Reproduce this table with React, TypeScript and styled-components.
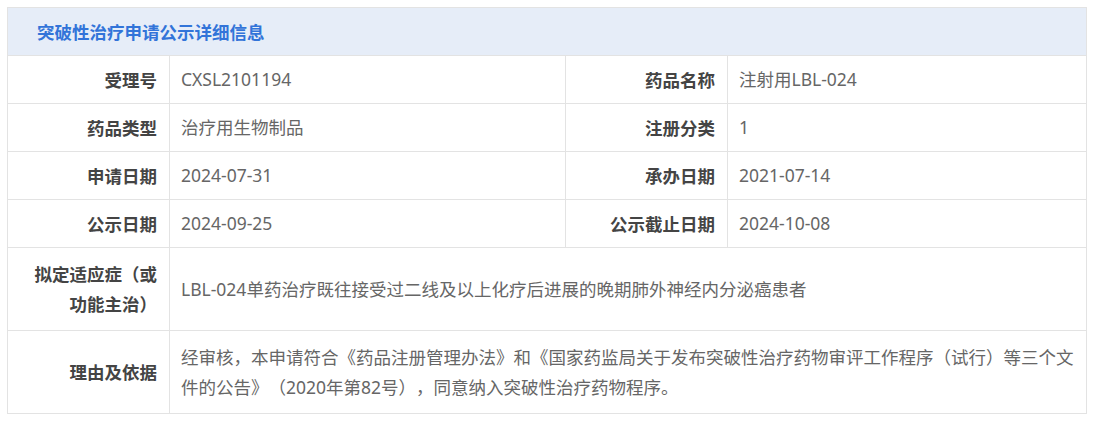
import React from "react";
import styled, { createGlobalStyle } from "styled-components";

const GlobalStyle = createGlobalStyle`
  html, body { margin: 0; padding: 0; background: #ffffff; }
  body {
    font-family: "Noto Sans", "Noto Sans CJK SC", sans-serif;
    text-spacing-trim: space-all;
  }
`;

const Page = styled.div`
  padding: 7px;
`;

const Table = styled.div`
  width: 1080px;
  box-sizing: border-box;
  display: grid;
  grid-template-columns: 162px 396px 162px 1fr;
  border-top: 1px solid #e3e3e3;
  border-left: 1px solid #e3e3e3;
`;

const Header = styled.div`
  grid-column: 1 / -1;
  height: 48px;
  box-sizing: border-box;
  background: #e6edf8;
  border-right: 1px solid #e3e3e3;
  border-bottom: 1px solid #e3e3e3;
  display: flex;
  align-items: center;
  padding-left: 29px;
  color: #3274d9;
  font-family: "Noto Sans CJK SC", sans-serif;
  font-weight: 700;
  font-size: 17.5px;
`;

const Cell = styled.div<{ $span?: boolean; $multi?: boolean }>`
  box-sizing: border-box;
  min-height: 48px;
  border-right: 1px solid #e3e3e3;
  border-bottom: 1px solid #e3e3e3;
  padding: 11px 12px;
  line-height: ${(p) => (p.$multi ? "30px" : "25px")};
  display: flex;
  align-items: center;
  text-spacing-trim: space-all;
  ${(p) => (p.$span ? "grid-column: 2 / -1;" : "")}
`;

const Label = styled(Cell)`
  justify-content: flex-end;
  text-align: right;
  font-family: "Noto Sans CJK SC", sans-serif;
  font-weight: 700;
  font-size: 17.5px;
  color: #444444;
`;

const Value = styled(Cell)`
  justify-content: flex-start;
  padding-left: 11px;
  font-size: 17.5px;
  color: #666666;
`;

const rows: [string, string, string, string][] = [
  ["受理号", "CXSL2101194", "药品名称", "注射用LBL-024"],
  ["药品类型", "治疗用生物制品", "注册分类", "1"],
  ["申请日期", "2024-07-31", "承办日期", "2021-07-14"],
  ["公示日期", "2024-09-25", "公示截止日期", "2024-10-08"],
];

export default function App() {
  return (
    <Page>
      <GlobalStyle />
      <Table>
        <Header>突破性治疗申请公示详细信息</Header>
        {rows.map(([l1, v1, l2, v2]) => (
          <React.Fragment key={l1}>
            <Label>{l1}</Label>
            <Value>{v1}</Value>
            <Label>{l2}</Label>
            <Value>{v2}</Value>
          </React.Fragment>
        ))}
        <Label $multi>拟定适应症（或功能主治）</Label>
        <Value $span $multi>
          LBL-024单药治疗既往接受过二线及以上化疗后进展的晚期肺外神经内分泌癌患者
        </Value>
        <Label $multi>理由及依据</Label>
        <Value $span $multi>
          经审核，本申请符合《药品注册管理办法》和《国家药监局关于发布突破性治疗药物审评工作程序（试行）等三个文件的公告》（2020年第82号），同意纳入突破性治疗药物程序。
        </Value>
      </Table>
    </Page>
  );
}
